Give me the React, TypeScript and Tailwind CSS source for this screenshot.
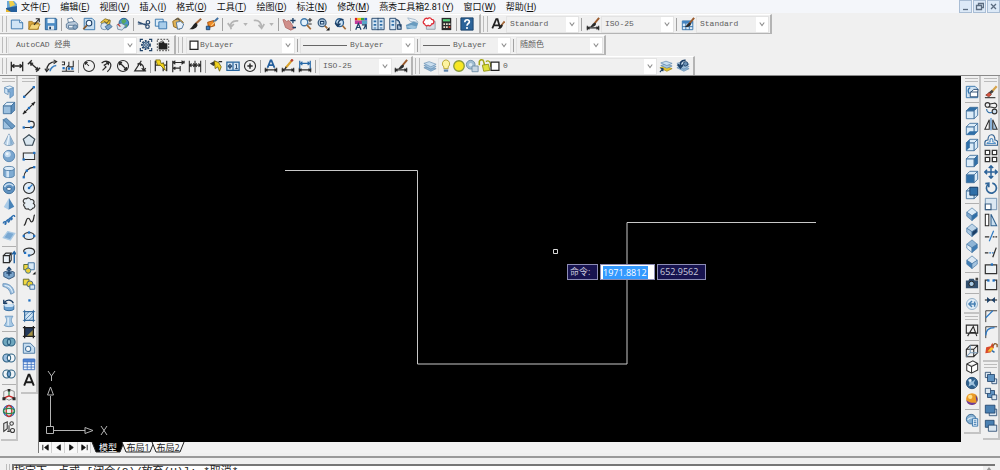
import { useState } from "react";
import type { ReactNode } from "react";
import clsx from "clsx";

const NAVY = "#1c3f66";
const BLUE = "#2f6fa8";
const SKY = "#a9cdea";
const PALE = "#dcecf8";
const INK = "#2b2b2b";

/* ---------- shared icon shapes, all on a 16x16 grid ---------- */

interface CubeProps {
  front?: string;
  top?: string;
  side?: string;
  stroke?: string;
}

function Cube({ front = PALE, top = PALE, side = PALE, stroke = "#3f6f9c" }: CubeProps) {
  return (
    <g stroke={stroke} strokeWidth="1" strokeLinejoin="round">
      <path d="M1.500 5.500h9v9h-9z" fill={front} />
      <path d="M1.500 5.500l4-4h9l-4 4z" fill={top} />
      <path d="M10.500 5.500l4-4v9l-4 4z" fill={side} />
    </g>
  );
}

function Iso({ left = PALE, right = PALE, top = PALE }: { left?: string; right?: string; top?: string }) {
  return (
    <g stroke="#4a7ba8" strokeWidth=".8" strokeLinejoin="round">
      <path d="M8 1l6 5-6 4-6-4z" fill={top} />
      <path d="M2 6l6 4v5.500L2 10.500z" fill={left} />
      <path d="M14 6l-6 4v5.500l6-5z" fill={right} />
    </g>
  );
}

function Dot({ x, y }: { x: number; y: number }) {
  return <rect x={x - 1.3} y={y - 1.3} width="2.600" height="2.600" fill="#1f6fc0" />;
}

function Rings({ left = "none", right = "none", mid = "none" }: { left?: string; right?: string; mid?: string }) {
  return (
    <g stroke="#2e6283" strokeWidth="1.2">
      <circle cx="5.500" cy="8" r="4.500" fill={left} />
      <circle cx="10.500" cy="8" r="4.500" fill={right} />
      <path d="M8 4.300a4.500 4.500 0 0 1 0 7.400a4.500 4.500 0 0 1 0-7.400z" fill={mid} />
    </g>
  );
}

function Brush() {
  return (
    <g>
      <path d="M15 1L9.500 7.500" stroke="#9a5a2c" strokeWidth="2.200" />
      <path d="M10.500 6.500C7 6.500 7 10 4.500 11c3 1 6.500 0 7-3.200z" fill={INK} />
    </g>
  );
}

function Pages({ fill = SKY }: { fill?: string }) {
  return (
    <g stroke={BLUE} strokeLinejoin="round">
      <path d="M1.500 2.500h9v8h-9z" fill={PALE} />
      <path d="M5.500 5.500h9v8h-9z" fill={fill} />
    </g>
  );
}

const sheets = (
  <g stroke="#5d87ad" strokeWidth=".7">
    <path d="M1 10l6-2 8 3-6 3z" fill="#8db3d3" />
    <path d="M1 7.500l6-2 8 3-6 3z" fill="#a9c8e2" />
    <path d="M1 5l6-2 8 3-6 3z" fill="#c9deef" />
  </g>
);

const dimBase = <path d="M1.500 10v5M14.500 10v5M2 12.500h12M4 11l-2.500 1.500L4 14M12 11l2.500 1.500L12 14" fill="none" stroke={INK} strokeWidth="1.3" />;

const icons: Record<string, ReactNode> = {
  new: (
    <g>
      <path d="M1.500 3.500h9.500l3.500 3v7h-13z" fill="#cfe4f5" stroke={BLUE} />
      <path d="M11 3.500v3h3.500" fill="#fff" stroke={BLUE} />
    </g>
  ),
  open: (
    <g>
      <path d="M2 14V5h4l1 1.500h6V14z" fill="#d9a53a" stroke="#9a6b14" strokeWidth=".8" />
      <path d="M2 14l3-6h10l-3 6z" fill="#f5d67a" stroke="#9a6b14" strokeWidth=".8" />
      <path d="M8 9L14 2M10 2h4v4" fill="none" stroke={INK} strokeWidth="1.300" />
    </g>
  ),
  save: (
    <g>
      <path d="M1.500 1.500h12l1 1v12h-13z" fill="#4d8cc4" stroke="#285d8f" />
      <path d="M4 2h8v5H4z" fill="#e7f2fb" />
      <path d="M4.500 10h7v4.500h-7z" fill="#dfe7ee" />
      <path d="M6 11h2v3H6z" fill={NAVY} />
    </g>
  ),
  print: (
    <g stroke="#4d6c8c" strokeWidth=".9">
      <path d="M4 7l-1-5 5-1 3 5z" fill="#fff" />
      <path d="M1.500 8l3-2 7-1 3 3v4l-3 2h-7l-3-2z" fill="#b9cadb" />
      <path d="M4 9.500h7l1 3H4z" fill="#eef4f9" />
      <circle cx="11.500" cy="11.500" r="2.500" fill="#8aa9c6" />
    </g>
  ),
  preview: (
    <g>
      <path d="M2.500 1.500h9l3 3v10h-12z" fill="#c7def1" stroke={BLUE} />
      <circle cx="8" cy="7" r="3.200" fill="#f2f9ff" stroke={NAVY} strokeWidth="1.200" />
      <path d="M5.500 9.500L1.500 14" stroke="#8a5a2b" strokeWidth="2" />
    </g>
  ),
  publish: (
    <g stroke="#6b5510" strokeWidth=".8">
      <path d="M2 6l5-4 6 2-1 5-6 2z" fill="#e9c23b" />
      <circle cx="6" cy="10.500" r="4" fill="#dbe7f2" stroke="#4c6f92" />
      <path d="M7 11l5-3 3 3-5 4z" fill="#7aa2c8" stroke="#2c5a87" />
      <path d="M6 5l3 2 3-4" fill="none" stroke={INK} />
    </g>
  ),
  globePrint: (
    <g>
      <circle cx="9" cy="7" r="5.500" fill="#4b93cf" stroke="#23588c" />
      <path d="M6 4l4-2 2 3-3 3-2-1zM9 9l4-1-1 4z" fill="#57a860" />
      <path d="M1 9l5-2 5 3-4 5-5-1z" fill="#d9e4ee" stroke="#5c7691" strokeWidth=".8" />
      <path d="M2 8l3 3" stroke="#c0392b" strokeWidth="1.300" />
    </g>
  ),
  cut: (
    <g fill="none" stroke="#2d4d72" strokeWidth="1.400">
      <path d="M1 5.500l10 4M1 8h10" />
      <circle cx="12.500" cy="6" r="2" />
      <circle cx="12" cy="11" r="2" />
    </g>
  ),
  copyClip: <Pages />,
  paste: (
    <g>
      <path d="M2 5l6-4 6 5-4 8-7-3z" fill="#e0b256" stroke="#8a6114" />
      <path d="M6 6l5-1 3.500 3-2 5-5 1z" fill="#e6f0fa" stroke="#466d93" />
      <path d="M5 3l3-1 2 2" fill="none" stroke="#555" strokeWidth="1.500" />
    </g>
  ),
  match: (
    <g>
      <path d="M15 2L8.500 8" stroke="#a4683a" strokeWidth="2.400" />
      <path d="M9.500 6.500C6 7 5.500 12 1.500 14c4 .6 8.500-1 9.500-5z" fill="#222" />
    </g>
  ),
  blockEdit: (
    <g>
      <path d="M3 6l7-2 1 6-7 2z" fill="#f08a24" stroke="#9b4a0c" />
      <path d="M15 1l-5 5" stroke="#3d6ea0" strokeWidth="2.200" />
      <path d="M1.500 10.500h4v4h-4z" fill="#3a7cc0" stroke={NAVY} />
      <path d="M12 5l-5 5" stroke="#fbd38a" strokeWidth="1.200" />
    </g>
  ),
  undo: <path d="M6 14C3.500 8 7 3.500 14 4.500M2 7l3.500 4.500L9 8" fill="none" stroke="#b4b4b4" strokeWidth="2" />,
  redo: <path d="M2 4c6-1 9 3 9 8M7.500 9l3.500 4 3-5" fill="none" stroke="#b4b4b4" strokeWidth="2" />,
  pan: (
    <g>
      <path d="M1 3l2 0 2 2 3-1 3 4 3 5-4 2-6-3z" fill="#d08f8a" stroke="#a7605c" strokeWidth=".8" />
      <path d="M12.500 1v6M9.500 4h6M12 12h4" stroke={NAVY} strokeWidth="1.500" />
    </g>
  ),
  zoomRt: (
    <g fill="none">
      <circle cx="6" cy="6" r="4" fill="#e3f1fb" stroke="#3f78ab" strokeWidth="1.500" />
      <path d="M9 9l4.500 5" stroke="#a26a35" strokeWidth="2" />
      <path d="M12.500 1v5M10 3.500h5M10.500 8h4" stroke={INK} strokeWidth="1.200" />
    </g>
  ),
  zoomWin: (
    <g fill="none">
      <circle cx="7" cy="6.500" r="4.500" fill="#cfe5f6" stroke="#3f5f80" strokeWidth="1.500" />
      <path d="M5 5h4v3H5z" stroke={NAVY} strokeWidth="1.200" />
      <path d="M10 10l3 3" stroke="#a26a35" strokeWidth="2" />
      <path d="M15.500 11.500v4h-4z" fill="#111" />
    </g>
  ),
  zoomPrev: (
    <g fill="none">
      <circle cx="7.500" cy="6.500" r="4.500" fill="#cfe5f6" stroke="#2c5d8d" strokeWidth="1.500" />
      <path d="M11 10l3.500 4" stroke="#a26a35" strokeWidth="2" />
      <path d="M12 3C8 2 6 5 5.500 9M2.500 6.500l3 4 3-3" stroke={NAVY} strokeWidth="1.700" />
    </g>
  ),
  props: (
    <g>
      <path d="M1 1h3v3H1z" fill="#d22" />
      <path d="M4 1h4v3H4z" fill="#e8c21e" />
      <path d="M8 1h4v3H8z" fill="#36a043" />
      <path d="M12 1h3v3h-3z" fill="#2b5fd0" />
      <path d="M1 4h14v4H1z" fill="#c23a9a" />
      <path d="M9 4h6v4H9z" fill="#58a6c8" />
      <path d="M2 14.500l3-7 3 7M3 12h4M9 9h5v5M11 14l3-6" fill="none" stroke={NAVY} strokeWidth="1.400" />
    </g>
  ),
  design: (
    <g>
      <path d="M1 1.500h14v13H1z" fill="#d6e6f4" stroke={NAVY} />
      <path d="M8 1v14" stroke={NAVY} />
      <path d="M3 4h3v2H3zM3 8h3v2H3zM3 12h3v1H3zM10 4h3v2h-3zM10 8h3v2h-3zM10 12h3v1h-3z" fill={BLUE} />
    </g>
  ),
  palettes: (
    <g>
      <path d="M2 1.500h7v13H2z" fill="#d6e6f4" stroke={NAVY} />
      <path d="M4 4h3v2H4zM4 8h3v2H4z" fill={BLUE} />
      <path d="M9 3c4 0 5 3 5 8M11 9h4v5h-4z" fill="#b5cbe0" stroke={NAVY} strokeWidth="1.200" />
    </g>
  ),
  sheetSet: (
    <g>
      <path d="M3 1l9 2 3 3-9-1z" fill="#e9f1f8" stroke="#93abc0" strokeWidth=".8" />
      <path d="M1 9l9-4 5 2-2 6-11 1z" fill="#6b9cbf" />
      <path d="M1 11l6-2 7 2-5 3z" fill="#9dc4de" />
    </g>
  ),
  markup: (
    <g>
      <path d="M5 5h10v9H5z" fill="#d4dde5" stroke="#8e9aa5" />
      <path d="M3 8a2.200 2.200 0 0 1-.5-4A2.500 2.500 0 0 1 6.500 2a2.600 2.600 0 0 1 4.500.8A2.500 2.500 0 0 1 11 8a2.500 2.500 0 0 1-4 1.500A2.500 2.500 0 0 1 3 8z" fill="#fff" stroke="#e0303a" strokeWidth="1.500" />
    </g>
  ),
  calc: (
    <g>
      <path d="M3 1h11v14H3z" fill="#2a2a2a" />
      <path d="M4.500 2.500h8v2.500h-8z" fill="#55d37a" />
      <path d="M5 7h2v2H5zM8 7h2v2H8zM11 7h2v2h-2zM5 10.500h2v2H5zM8 10.500h2v2H8z" fill="#e7e0d0" />
      <path d="M11 10.500h2v2h-2z" fill="#e04a3a" />
    </g>
  ),
  help: (
    <g>
      <path d="M1 1h14v14H1z" fill="#2b6399" stroke="#173e66" />
      <path d="M5.500 6c0-4 5.500-3.500 5.200-.5C10.500 7.500 8 7.500 8 10" fill="none" stroke="#fff" strokeWidth="1.900" />
      <circle cx="8" cy="12.500" r="1.200" fill="#fff" />
    </g>
  ),
  textStyle: (
    <g>
      <path d="M1.500 13L6 2.500h1.500L10.500 13M3 9.500h6" fill="none" stroke="#222" strokeWidth="2" />
      <path d="M15.500 5l-4 5" stroke="#a4683a" strokeWidth="2" />
      <path d="M12.500 8.500c-3 0-2.500 3.500-5 5 3 .5 5.500-1 6-4z" fill="#222" />
    </g>
  ),
  dimStyle: (
    <g>
      {dimBase}
      <Brush />
    </g>
  ),
  tableStyle: (
    <g>
      <path d="M1.500 4.500h12v10h-12z" fill="#dcebf8" stroke={BLUE} />
      <path d="M1.500 4.500h12v3h-12z" fill="#4385c2" />
      <path d="M1.500 11h12M5.500 7v7.500M9.500 7v7.500" stroke={BLUE} />
      <Brush />
    </g>
  ),
  gear: (
    <g fill="none" stroke={NAVY}>
      <path d="M1.500 4.500v-3h3M11.500 1.500h3v3M14.500 11.500v3h-3M4.500 14.500h-3v-3" strokeWidth="1.300" />
      <circle cx="8" cy="8" r="4.600" strokeWidth="2" strokeDasharray="2 1.300" />
      <circle cx="8" cy="8" r="3.600" fill="#a7bfd6" />
      <circle cx="8" cy="8" r="1.500" fill="#fff" />
    </g>
  ),
  workspace: (
    <g>
      <path d="M1.500 1.500h13v13h-13z" fill="none" stroke="#333" strokeDasharray="2 1.500" />
      <path d="M3 13V5h4l1-2 2 3h3v7z" fill="#222" />
      <path d="M4 5l4-2" stroke="#5a5a5a" />
    </g>
  ),
  dimLinear: <path d="M1.500 3v11M14.500 3v11M2 8h12M5 6L2 8l3 2M11 6l3 2-3 2" fill="none" stroke={INK} strokeWidth="1.500" />,
  dimAligned: (
    <g fill="none" stroke={INK} strokeWidth="1.500">
      <path d="M5.500 1.500L1 6M15 10l-4.500 4.500M3.500 4L13 12.500" />
      <path d="M3 4l4 .5L4.500 8zM13.500 13l-4-.5L12 9z" fill={INK} strokeWidth=".5" />
    </g>
  ),
  dimArc: (
    <g fill="none">
      <path d="M3 14C3 7 7 3 14 3" stroke={INK} strokeWidth="1.400" />
      <path d="M7 14c0-3 3-6 7-6.500" stroke="#3a80c4" strokeWidth="1.800" />
      <path d="M1 11l2 3.500L6 11M11 1l3.500 2L11 5.500" stroke={INK} strokeWidth="1.200" />
    </g>
  ),
  dimOrd: (
    <g fill="none" stroke={INK} strokeWidth="1.200">
      <path d="M1 3.500h3v3H1M1 14h14M9 3v6h5M6 10v4M14 2v7M6 10l3-3" />
      <g stroke="none">
        <Dot x={3} y={10.5} />
        <Dot x={9} y={11} />
        <Dot x={13} y={11} />
      </g>
    </g>
  ),
  dimRad: (
    <g fill="none" stroke={INK} strokeWidth="1.200">
      <circle cx="8" cy="8" r="6.300" />
      <path d="M8 8L4 4M4 6.500V4h2.500" />
    </g>
  ),
  dimJog: <path d="M3 4.500C8 .5 14 3 13.500 8c-.3 3-2 5-4 6.500M4 13l4-4-2-2 5-3M8 3.500l3 .5-.5 3" fill="none" stroke={INK} strokeWidth="1.400" />,
  dimDia: (
    <g fill="none" stroke={INK} strokeWidth="1.200">
      <circle cx="8" cy="8" r="6.300" />
      <path d="M4 4l8 8M4 7V4h3M12 9v3H9" strokeWidth="1.500" />
    </g>
  ),
  dimAng: <path d="M15 13.500H2L9.500 2M7 5c4 .5 5.500 4 5.500 8M5 6l3-1.500L9 8M10 10.500l2.500 3 2-3" fill="none" stroke={INK} strokeWidth="1.400" />,
  dimQuick: (
    <g>
      <path d="M1.500 2v12M14.500 2v12M10.500 4v10M2 7h12" stroke={INK} strokeWidth="1.400" />
      <path d="M2 1h5l1 4h3l2 8-6-6H4z" fill="#f1d21a" stroke="#6b5c00" strokeWidth=".8" />
    </g>
  ),
  dimBaseLine: <path d="M2 2v13M15 2v3M10.500 8v6M2 4h13M2 10.500h8M5 2L2.500 4 5 6M12 2l2.500 2-2.500 2M5 9l-2.500 1.500L5 12" fill="none" stroke={INK} strokeWidth="1.300" />,
  dimCont: <path d="M1.500 2v13M8 2v13M14.500 2v13M2 7h12M4 5L2 7l2 2M6 5l2 2-2 2M10 5L8 7l2 2M12 5l2 2-2 2" fill="none" stroke={INK} strokeWidth="1.200" />,
  dimSpace: (
    <g>
      <path d="M1 5l6-3 3 3-5 3z" fill="#3a3a3a" />
      <path d="M6 2l5 2 3 5-2 5-2-5-3 2z" fill="#efd01f" stroke="#5d5000" strokeWidth=".8" />
      <path d="M11 3h4" stroke={INK} strokeWidth="1.500" />
    </g>
  ),
  tolerance: (
    <g>
      <path d="M1 3.500h14v9.500H1z" fill="#d6e6f4" stroke="#27649c" strokeWidth="1.400" />
      <path d="M8 4v9" stroke="#27649c" strokeWidth="1.400" />
      <circle cx="4.500" cy="8.300" r="1.800" fill="none" stroke={NAVY} />
      <path d="M2 8.300h5M4.500 5.500v6M10.500 6.500l1.500-.5v5M10.500 11h3" fill="none" stroke={NAVY} />
    </g>
  ),
  center: (
    <g fill="none" stroke={INK} strokeWidth="1.300">
      <circle cx="8" cy="8" r="6.300" />
      <path d="M8 5v6M5 8h6" strokeWidth="1.700" />
    </g>
  ),
  dimEdit: (
    <g>
      <path d="M4 10l3.500-8.500h1L12 10M5.500 7h5" fill="none" stroke="#245f9d" strokeWidth="2" />
      {dimBase}
    </g>
  ),
  dimTEdit: (
    <g>
      {dimBase}
      <path d="M13 1L5.500 10" stroke="#d9a22c" strokeWidth="2.400" />
      <path d="M13.500 .5l-2 2" stroke="#b8433a" strokeWidth="2.600" />
      <path d="M6 9l-1.500 2.500" stroke={INK} strokeWidth="1.500" />
    </g>
  ),
  dimUpdate: (
    <g>
      {dimBase}
      <path d="M2 2v9M14 2v9M3 5h10M5 3L3 5l2 2M11 3l2 2-2 2" fill="none" stroke="#2869a8" strokeWidth="1.400" />
    </g>
  ),
  layers: sheets,
  bulb: (
    <g>
      <path d="M8 1a4.500 4.500 0 0 0-2.500 8v2h5V9A4.500 4.500 0 0 0 8 1z" fill="#fdf3a0" stroke="#b4a02c" />
      <path d="M5.500 12h5v2.500h-5z" fill="#5e84ac" />
    </g>
  ),
  sun: <circle cx="8" cy="8" r="6" fill="#f8e723" stroke="#8a9a3a" strokeWidth="1.500" />,
  vpFreeze: (
    <g>
      <circle cx="6.500" cy="6.500" r="5" fill="#9fbdd2" stroke="#6b8ca5" />
      <path d="M8 8h7v6.500H8z" fill="#c6d6e2" stroke="#6b8ca5" />
      <circle cx="6.500" cy="6.500" r="2" fill="#dbe8f1" />
    </g>
  ),
  lock: (
    <g>
      <path d="M1.500 7V4a2.500 2.500 0 0 1 5-1l1 4" fill="none" stroke="#a6a81a" strokeWidth="1.800" />
      <path d="M5 7l7-1 1.500 7-7 1z" fill="#dfe03a" stroke="#8d9010" />
      <path d="M9 3c3-2 6 0 5.500 6" fill="none" stroke="#a6a81a" strokeWidth="1.500" />
    </g>
  ),
  swatch: <path d="M3.500 3.500h9v9.500h-9z" fill="#fff" stroke="#222" strokeWidth="1.400" />,
  layerCurrent: (
    <g>
      <path d="M1 10l6-2 8 3-6 3z" fill="#e4c32d" stroke="#8d7712" strokeWidth=".7" />
      <path d="M2 7.500l6-2 7 2.500-6 2.500z" fill="#a9c8e2" stroke="#4f7ba5" strokeWidth=".7" />
      <path d="M2 4.500l6-2 7 2.500-6 2.500z" fill="#c9deef" stroke="#4f7ba5" strokeWidth=".7" />
      <path d="M1 15l3.500-4M2 11h2.500v3" fill="none" stroke={NAVY} strokeWidth="1.300" />
    </g>
  ),
  layerPrev: (
    <g>
      {sheets}
      <path d="M11 1.500C6 1 4.500 4 5 8M2 6l3 4 3-3.500" fill="none" stroke={NAVY} strokeWidth="2" />
      <circle cx="11" cy="5.500" r="2.500" fill="#6a90b4" stroke={NAVY} />
    </g>
  ),
  polysolid: (
    <g stroke="#5585b3" strokeWidth=".8">
      <path d="M3 3l4 2v6l-4-2z" fill="#cfe3f4" />
      <path d="M7 5l6-2v9l-4 3V8H7z" fill="#7eabd6" />
      <path d="M5 2l4-1 4 2-6 2-4-2z" fill="#e9f4fc" />
    </g>
  ),
  box: <Cube front="#9cc0df" top="#e2effa" side="#5e8fbd" stroke="#41719d" />,
  wedge: (
    <g stroke="#41719d" strokeWidth=".9" strokeLinejoin="round">
      <path d="M1.500 3l10 10.500h-10z" fill="#9fc2e0" />
      <path d="M1.500 3L5 1.500l10 9-3.500 3z" fill="#6b9ac4" />
    </g>
  ),
  cone: (
    <g stroke="#6d8eae" strokeWidth=".9">
      <path d="M8 1l5.500 11c-1 3-10 3-11 0z" fill="#bcd4e9" />
      <path d="M9 3l3.500 9-3 2z" fill="#86aed0" stroke="none" />
      <path d="M8 2L6 13.500" stroke="#eaf4fb" strokeWidth="1.500" />
    </g>
  ),
  sphere: (
    <g>
      <circle cx="8" cy="8" r="6.500" fill="#7aa6cf" stroke="#5684b0" />
      <circle cx="6.500" cy="6" r="3.500" fill="#c6dcf0" />
      <circle cx="6" cy="5.500" r="1.500" fill="#eef6fc" />
    </g>
  ),
  cylinder: (
    <g stroke="#41719d" strokeWidth=".9">
      <path d="M2 4v8.500c1 2.500 11 2.500 12 0V4z" fill="#7fabd2" />
      <path d="M5 5.500h3V14H5z" fill="#d2e5f5" stroke="none" />
      <ellipse cx="8" cy="4" rx="6" ry="2.400" fill="#dcebf8" />
    </g>
  ),
  torus: (
    <g>
      <circle cx="8" cy="8" r="6.500" fill="#5f92c1" stroke="#376a98" />
      <path d="M3 7c1-4 8-5 10-1" fill="none" stroke="#c8def1" strokeWidth="1.800" />
      <ellipse cx="8" cy="9" rx="2.700" ry="1.900" fill="#eef3f7" stroke="#2e5e8c" />
    </g>
  ),
  pyramid: (
    <g>
      <path d="M8 1L2 11.500l5.500 3z" fill="#a9cbe8" />
      <path d="M8 1l6 10-6.500 3.500z" fill="#4883b8" />
    </g>
  ),
  helix: (
    <path d="M1.500 12c0-3 4-3 3 0s-2-1 1-3.500 4 0 2.500 1.500-2-2 .5-3.800 4 0 2.500 1.300-1.500-2.500 1-4 2.500 0 2.500 1" fill="none" stroke="#2e6fb0" strokeWidth="1.500" />
  ),
  planar: <path d="M6.500 3l8 2-5 7.500-8-2.500z" fill="#7aa8d2" stroke="#a9c9e4" strokeWidth="1.500" />,
  extrude: (
    <g>
      <path d="M1.500 6.500h7v8h-7zM1.500 6.500l3-3h6l-2 3M8.500 14.500l2-3v-8" fill="#eaf1f7" stroke={INK} strokeWidth="1.300" />
      <path d="M14 15V3M11.500 5L14 2l2 3" fill="none" stroke="#2162a2" strokeWidth="1.600" />
    </g>
  ),
  presspull: (
    <g>
      <path d="M2 7l6-2 6 2v5l-6 3-6-3z" fill="#7ba5cb" stroke={NAVY} strokeWidth=".9" />
      <path d="M8 11V2M5.500 4.500L8 1.500l2.500 3M5 8h6" fill="none" stroke={NAVY} strokeWidth="1.500" />
    </g>
  ),
  sweep: (
    <g>
      <path d="M1 5V2c6-1 12 3 13 10l-4 2C9 9 6 6 1 5z" fill="#9bbfdf" stroke="#6690b8" strokeWidth=".9" />
      <path d="M3 4c5 0 8 3 9 8" fill="none" stroke="#e9f3fb" strokeWidth="1.200" />
    </g>
  ),
  revolve: (
    <g>
      <path d="M2.500 8h11v5c-2 2-9 2-11 0z" fill="#6aa0d0" stroke="#2f679c" />
      <path d="M13 6C11 1.500 5 1.500 3 5M2 2v4h4" fill="none" stroke={NAVY} strokeWidth="1.500" />
      <ellipse cx="8" cy="8.500" rx="5.500" ry="1.800" fill="#cfe4f5" />
    </g>
  ),
  loft: (
    <g>
      <path d="M3.500 2.500h9C10 6 10 9 13.500 13c-2 2-9 2-11 0C6 9 6 6 3.500 2.500z" fill="#a7c8e4" stroke="#6b99c2" />
      <path d="M7 4v9" stroke="#e6f1fa" strokeWidth="1.500" />
    </g>
  ),
  union: <Rings left="#6fa7be" right="#6fa7be" mid="#8dbccf" />,
  subtract: <Rings left="#9dbfe0" right="#f4f7fa" mid="#ffffff" />,
  intersect: <Rings left="#eef3f7" right="#eef3f7" mid="#6f9fd0" />,
  move3d: (
    <g fill="none" strokeWidth="1.400">
      <path d="M2 4l6-2.500L14 4v7l-6 3-6-3z" stroke="#666" strokeWidth=".8" />
      <path d="M8 9V3" stroke="#2d8a4e" />
      <path d="M8 9l6 2.500" stroke="#c22" />
      <path d="M8 9l-6 2.500" stroke="#c22" />
      <path d="M12 10.500h3.500V14H12zM.5 10.500H4V14H.5zM6.500 1h3v3h-3z" fill={INK} stroke="none" />
    </g>
  ),
  rotate3d: (
    <g fill="none" strokeWidth="1.500">
      <circle cx="8" cy="8" r="6.300" stroke="#2458b0" />
      <ellipse cx="8" cy="8" rx="3.200" ry="6.300" stroke="#c8322b" />
      <ellipse cx="8" cy="8" rx="6.300" ry="3" stroke="#2d8a4e" />
    </g>
  ),
  align3d: (
    <g fill="none" stroke="#3a3a3a" strokeWidth="1.200">
      <path d="M2 4l4-2v8l-4 3z" fill="#e6e6e6" />
      <circle cx="11" cy="4" r="2" />
      <circle cx="12" cy="12" r="2.300" />
      <path d="M8 6v7M6 13h3" />
    </g>
  ),
  line: (
    <g>
      <path d="M2 14L14 2" stroke={INK} strokeWidth="1.300" />
      <Dot x={2.5} y={13.5} />
      <Dot x={13.5} y={2.5} />
    </g>
  ),
  xline: (
    <g>
      <path d="M1 15L15 1" stroke={INK} strokeWidth="1.500" />
      <path d="M2.500 10.500l3 3-4 1zM13.500 5.500l-3-3 4-1z" fill="#222" />
      <Dot x={8} y={8} />
    </g>
  ),
  pline: (
    <g>
      <path d="M2 12h9c4 0 4-7 0-7H8" fill="none" stroke={INK} strokeWidth="1.300" />
      <Dot x={2} y={12} />
      <Dot x={10.5} y={12} />
      <Dot x={8} y={5} />
    </g>
  ),
  polygon: <path d="M8 2l6.500 5-2.500 7H4L1.500 7z" fill="#d8e5ee" stroke="#3a4a55" strokeWidth="1.400" />,
  rect: (
    <g>
      <path d="M1.500 4.500h13v7.500h-13z" fill="#e8f0f6" stroke={INK} strokeWidth="1.200" />
      <Dot x={2} y={12} />
      <Dot x={14} y={4.5} />
    </g>
  ),
  arc: (
    <g>
      <path d="M2 14C2.500 8 7 3 14 2.500" fill="none" stroke={INK} strokeWidth="1.300" />
      <Dot x={2} y={14} />
      <Dot x={5.5} y={6.5} />
      <Dot x={14} y={2.5} />
    </g>
  ),
  circle: (
    <g>
      <circle cx="8" cy="8" r="6.300" fill="#e2edf6" stroke={INK} strokeWidth="1.300" />
      <path d="M8 8l4-4" stroke="#2f7ac4" strokeWidth="1.300" />
      <Dot x={8} y={8} />
    </g>
  ),
  cloud: (
    <path d="M3 7a2.700 2.700 0 0 1 2-5 3 3 0 0 1 5 1 2.800 2.800 0 0 1 3 4.500 2.900 2.900 0 0 1-1 5.500 2.800 2.800 0 0 1-5 .5A2.800 2.800 0 0 1 3 11a2.300 2.300 0 0 1 0-4z" fill="#e6eef4" stroke="#333" strokeWidth="1.300" />
  ),
  spline: <path d="M2 14c3 0 2-8 5-8s2 5 4.500 4S13 3 14.500 2" fill="none" stroke={INK} strokeWidth="1.400" />,
  ellipse: (
    <g>
      <ellipse cx="8" cy="8" rx="6" ry="4" fill="#dfeaf4" stroke={INK} strokeWidth="1.300" />
      <Dot x={2} y={8} />
      <Dot x={14} y={8} />
      <Dot x={8} y={4} />
    </g>
  ),
  ellArc: (
    <g>
      <path d="M3 9C0 6 4 3.500 8 3.500c8 0 9 8 0 8.500" fill="#dfeaf4" stroke={INK} strokeWidth="1.300" />
      <Dot x={3.5} y={9} />
      <Dot x={8} y={12} />
    </g>
  ),
  insert: (
    <g>
      <path d="M2 4h6v6H2z" fill="#f0d742" stroke="#4a5f27" />
      <path d="M7 2h7v8H7z" fill="#d9e9f6" stroke="#34689a" />
      <circle cx="7" cy="11" r="3" fill="#e9cf35" stroke="#34689a" />
      <path d="M15.500 12v3.500H12z" fill="#111" />
    </g>
  ),
  makeBlock: (
    <g>
      <path d="M1.500 2.500h6.500v6.500H1.500z" fill="#f0d742" stroke="#5e6323" />
      <circle cx="9" cy="8" r="3.500" fill="#ead033" stroke="#3b5a7c" />
      <path d="M9 9h5.500v5H9z" fill="#d9e9f6" stroke="#34689a" />
    </g>
  ),
  point: <Dot x={8.5} y={8.5} />,
  hatch: (
    <g stroke="#2f679c">
      <path d="M3 3h10v10H3z" fill="#cfe4f5" />
      <path d="M1 3h14M1 13h14M3 1v14M13 1v14" />
      <path d="M3 8l5-5M3 13L13 3M8 13l5-5" strokeWidth=".8" />
    </g>
  ),
  gradient: (
    <g>
      <path d="M3 3h10v10H3z" fill="#23395a" />
      <path d="M5 13L13 5v8z" fill="#a18f42" />
      <path d="M1 3h14M1 13h14M3 1v14M13 1v14" stroke="#222" strokeWidth="1.500" />
    </g>
  ),
  region: (
    <g stroke="#41719d">
      <path d="M1.500 2.500h8l5 5v6.500h-13z" fill="#c5dcef" />
      <circle cx="7" cy="9" r="3" fill="#f4f8fb" strokeWidth="1.200" />
    </g>
  ),
  table: (
    <g stroke="#3b6fc0">
      <path d="M1.500 2.500h13v12h-13z" fill="#eaf2fc" />
      <path d="M1.500 2.500h13v3h-13z" fill="#4d83d6" />
      <path d="M1.500 8.500h13M1.500 11.500h13M6 5v9.500M10.500 5v9.500" strokeWidth=".9" />
    </g>
  ),
  mtext: <path d="M2.500 14.500L7.500 2h1l5 12.500M4.500 10.500h7" fill="none" stroke="#1c1c1c" strokeWidth="2.200" />,
  namedViews: (
    <g>
      <path d="M1.500 1.500h10l3 3v10h-13z" fill="#cfe2f2" stroke={BLUE} />
      <path d="M6 8h8.500v5.500H6zM7 8l3-3h5l-.5 3" fill="#fff" stroke={NAVY} />
      <path d="M6 3c-3 1-3 5-1 7" fill="none" stroke={BLUE} strokeWidth="1.500" />
    </g>
  ),
  vTop: <Cube top={BLUE} />,
  vBottom: (
    <g>
      <Cube />
      <path d="M1.500 14.500l4-4h9l-4 4z" fill={BLUE} />
    </g>
  ),
  vLeft: (
    <g>
      <Cube />
      <path d="M1.500 5.500l4-4v9l-4 4z" fill={BLUE} />
    </g>
  ),
  vRight: <Cube side={BLUE} />,
  vFront: <Cube front={BLUE} />,
  vBack: (
    <g>
      <Cube />
      <path d="M5.500 1.500h9v9h-9z" fill={BLUE} stroke={NAVY} />
    </g>
  ),
  isoSW: <Iso left="#7fa9cf" right={BLUE} />,
  isoSE: <Iso left="#a9c7e0" right={NAVY} top="#bcd4e8" />,
  isoNE: <Iso left="#e4eff8" right="#3f7db5" top="#8fb5d6" />,
  isoNW: <Iso left="#3f7db5" right="#a5c4df" top="#dbe8f3" />,
  camera: (
    <g>
      <path d="M1 5h3l1-2h5l1 2h4v9H1z" fill="#33506f" />
      <circle cx="7.500" cy="9" r="3" fill="#a9cbe6" stroke="#111" />
      <path d="M12 2h3v3h-3z" fill="#444" />
    </g>
  ),
  viewPrev: (
    <g fill="none" stroke="#4a82b4">
      <circle cx="8" cy="8" r="6.300" fill="#e2edf6" stroke="#8cabc6" />
      <path d="M12.500 8H4.500M8 4.500L4.500 8 8 11.500M11 5v6" strokeWidth="1.700" />
    </g>
  ),
  wire2d: <path d="M1.500 2.500h13v9h-13zM3 15L9.500 4l4 11M6 11h6" fill="none" stroke={INK} strokeWidth="1.300" />,
  wire3d: (
    <g fill="none" stroke="#222" strokeWidth="1.200" strokeLinejoin="round">
      <path d="M1.500 6h8.500v8.500H1.500zM1.500 6L6 1.500h8.500L10 6M14.500 1.500V10L10 14.500" />
      <path d="M6 1.500V10h8.500M6 10l-4.500 4.500" stroke="#7a9cba" />
    </g>
  ),
  hidden3d: <path d="M2 4.500L9 1l5.500 3v7.500L7.500 15 2 12zM2 4.500l5.500 3 7-3.500M7.500 7.500V15" fill="#fff" stroke="#333" strokeWidth="1.200" strokeLinejoin="round" />,
  realistic: (
    <g>
      <circle cx="8" cy="8" r="6.500" fill="#2f618e" stroke="#234c73" />
      <path d="M3 3.500l5 3 4-3-2 4.500 3 5-5-3-4 2 1-4z" fill="#9fc2de" />
      <circle cx="6" cy="5" r="1.500" fill="#e3f0fa" />
    </g>
  ),
  conceptual: (
    <g>
      <circle cx="8" cy="8" r="6.700" fill="#eb9a26" />
      <path d="M1.500 9a6.700 6.700 0 0 0 12 3C9 13 4 12 1.500 9z" fill="#6c3da0" />
      <circle cx="6" cy="5.500" r="2.500" fill="#ffe08a" />
      <path d="M12 3.500c3 3 3 6 1.500 8.500-1-3-1-6-1.500-8.500z" fill="#5b3f9e" />
    </g>
  ),
  styleMgr: (
    <g>
      <circle cx="7" cy="7" r="5.500" fill="#86b0d2" stroke="#35658f" />
      <path d="M3 8c2-3 6-3 8-1" fill="none" stroke="#dcebf6" strokeWidth="1.500" />
      <path d="M8.500 6.500h6v8.500h-6z" fill="#eaf3fb" stroke={BLUE} />
      <path d="M10 9h3M10 11h3M10 13h3" stroke={BLUE} />
    </g>
  ),
  erase: (
    <g>
      <path d="M14.500 1.500L8 8.500" stroke="#d7a44a" strokeWidth="2.600" />
      <path d="M6 10l4-3.500" stroke="#444" strokeWidth="3" />
      <path d="M2 11.500l4-3 2.500 2.500-3 2.500z" fill="#d9543f" stroke="#7a3226" strokeWidth=".8" />
      <path d="M1 14.500h12" stroke={INK} strokeWidth="1.200" />
    </g>
  ),
  copy: (
    <g fill="none" stroke="#333" strokeWidth="1.300">
      <circle cx="4" cy="4.500" r="2.700" />
      <path d="M6.500 3.500l5-1a2.700 2.700 0 1 1-1 5l-5-1" />
      <circle cx="12" cy="12" r="2.700" fill="#cfe2f2" />
      <path d="M3 9c0 4 3 5 6 4" stroke={BLUE} />
    </g>
  ),
  mirror: (
    <g strokeWidth="1.200">
      <path d="M6 3v11H1z" fill="#fff" stroke={INK} />
      <path d="M10 3v11h5z" fill="#a9c6df" stroke="#333" />
      <path d="M8 1v14" stroke="#2f7ac4" />
    </g>
  ),
  offset: (
    <g fill="none" strokeWidth="1.300">
      <path d="M1 14v-3c0-3 3-3 3.500-3 0-8 8-8 8 0 3 0 3.500 2 3 6z" stroke="#2d5e8e" />
      <path d="M3.500 12c0-2 3-1.500 3.500-2-1-5 4-5 3 0 1 .5 3 0 3 2z" stroke="#5592c9" />
    </g>
  ),
  array: <path d="M1.500 1.500h5v5h-5zM9.500 1.500h5v5h-5zM1.500 9.500h5v5h-5zM9.500 9.500h5v5h-5z" fill="#fff" stroke="#333" strokeWidth="1.500" />,
  move: <path d="M8 1v14M1 8h14M5.500 3.500L8 1l2.500 2.500M5.500 12.500L8 15l2.500-2.500M3.500 5.500L1 8l2.500 2.500M12.500 5.500L15 8l-2.500 2.500" fill="none" stroke="#2b6299" strokeWidth="1.700" />,
  rotate: <path d="M4.500 4a5.700 5.700 0 1 0 5-1.500M1.500 3l4-.5V7" fill="none" stroke="#2f6599" strokeWidth="1.900" />,
  scale: (
    <g>
      <path d="M1.500 1.500h13v13h-13z" fill="#dbe8f3" stroke="#6a8dae" />
      <path d="M1.500 8h6.500v6.500H1.500z" fill="#fff" stroke="#3a5e82" strokeWidth="1.300" />
    </g>
  ),
  stretch: (
    <g>
      <path d="M1.500 1.500h4v13h-4z" fill="#fff" stroke={INK} strokeWidth="1.200" />
      <path d="M8 1.500L14.500 14.500H8z" fill="#c9deef" stroke="#31618f" strokeWidth="1.200" />
    </g>
  ),
  trim: (
    <g strokeWidth="1.400">
      <path d="M1 9h5" stroke={INK} />
      <path d="M6 14l5-12" stroke="#2f7ac4" />
      <path d="M10 9h5" stroke={INK} strokeDasharray="2 1" />
    </g>
  ),
  extend: (
    <g strokeWidth="1.400">
      <path d="M1 9h4" stroke={INK} />
      <path d="M6 9h5" stroke="#2f7ac4" strokeDasharray="2 1" />
      <path d="M10 14l4-11" stroke={INK} />
    </g>
  ),
  breakPt: (
    <g>
      <path d="M1.500 4.500h13v10h-13z" fill="#eef2f5" stroke="#333" strokeWidth="1.400" />
      <Dot x={9} y={4} />
    </g>
  ),
  breakAt: (
    <g>
      <path d="M5 3.500H1.500v11h13v-11H11" fill="#eef2f5" stroke="#333" strokeWidth="1.400" />
      <Dot x={5} y={4} />
      <Dot x={11} y={4} />
    </g>
  ),
  join: (
    <g>
      <path d="M1 8h14" stroke="#333" strokeWidth="1.400" />
      <path d="M3.500 4.500L7.500 8l-4 3.500zM12.500 4.500L8.500 8l4 3.500z" fill={NAVY} />
    </g>
  ),
  chamfer: (
    <g fill="none" strokeWidth="1.400">
      <path d="M2 15V2h13" stroke={INK} strokeWidth="1" />
      <path d="M2 10l8-8" stroke="#2f7ac4" />
    </g>
  ),
  fillet: (
    <g fill="none" strokeWidth="1.400">
      <path d="M2 15V2h13" stroke={INK} strokeWidth="1" />
      <path d="M2 12c0-6 4-9 10-9" stroke="#2f7ac4" />
    </g>
  ),
  explode: (
    <g>
      <path d="M1.500 14l1-7 5-1 2-4 2 5-4 6z" fill="#d94a2b" />
      <path d="M4 12l4-5 3 1-3 4z" fill="#f6c52f" />
      <path d="M10 6c2-3 2-4 5-2v3" fill="none" stroke="#8a5a2c" strokeWidth="1.500" />
      <path d="M9 11l3 2" stroke="#2f6fa8" strokeWidth="1.800" />
    </g>
  ),
  front: (
    <g stroke={NAVY} strokeWidth=".9">
      <path d="M1.500 1.500h6v6h-6zM9 9h5.500v5.500H9z" fill="#dbe7f1" />
      <path d="M4 4h8v8H4z" fill="#5f93c2" />
    </g>
  ),
  back: (
    <g stroke={NAVY} strokeWidth=".9">
      <path d="M4 4h8v8H4z" fill="#5f93c2" />
      <path d="M1.500 1.500h6v6h-6zM9 9h5.500v5.500H9z" fill="#dbe7f1" />
    </g>
  ),
  above: (
    <g stroke={NAVY} strokeWidth=".9">
      <path d="M6 7h8.500v7.500H6z" fill="#dbe7f1" />
      <path d="M1.500 2.500h11v9h-11z" fill="#4a80b2" />
    </g>
  ),
  under: (
    <g stroke={NAVY} strokeWidth=".9">
      <path d="M1.500 1.500h10v8h-10z" fill="#4a80b2" />
      <path d="M5 7h9.500v7H5z" fill="#dbe7f1" />
    </g>
  ),
};

function Ico({ name, className }: { name: string; className?: string }) {
  return (
    <svg viewBox="0 0 16 16" className={clsx("h-[14px] w-[14px] shrink-0", className)}>
      {icons[name]}
    </svg>
  );
}

/* ---------- toolbars ---------- */

function Tool({ name, vertical }: { name: string; vertical?: boolean }) {
  return (
    <button
      type="button"
      aria-label={name}
      className={clsx("flex shrink-0 items-center justify-center", vertical ? "h-4 w-full" : "h-full w-[17px]")}
    >
      <Ico name={name} />
    </button>
  );
}

function Tools({ names, vertical }: { names: string; vertical?: boolean }) {
  return (
    <>
      {names.split(" ").map((name, i) =>
        name === "|" ? (
          <span key={i} className={clsx("flex shrink-0 items-center justify-center", vertical ? "h-[5px] w-full" : "h-full w-1")}>
            <span className={vertical ? "h-px w-[14px] bg-[#b0b0b0]" : "h-[13px] w-px bg-[#a2a2a2]"} />
          </span>
        ) : (
          <Tool key={i} name={name} vertical={vertical} />
        )
      )}
    </>
  );
}

function Bar({ children }: { children: ReactNode }) {
  return (
    <div className="flex h-5 shrink-0 items-center border-t border-r-2 border-b border-t-white border-r-[#b4b4b4] border-b-[#b4b4b4]">
      <span className="mr-px ml-[2px] h-4 w-[5px] shrink-0 border-x border-[#bcbcbc]" />
      {children}
    </div>
  );
}

function Column({ children, tight }: { children: ReactNode; tight?: boolean }) {
  return (
    <div className={clsx("flex w-[17px] flex-col border-r-2 border-b-2 border-[#c4c4c4]", !tight && "pb-1")}>
      <span className="mx-px my-[2px] h-1 shrink-0 border-y border-[#bcbcbc]" />
      {children}
    </div>
  );
}

interface ComboProps {
  label: string;
  value: string;
  className: string;
  lead?: ReactNode;
}

function Combo({ label, value, className, lead }: ComboProps) {
  return (
    <label className={clsx("flex h-[17px] shrink-0 items-center border border-[#e3e3e3] bg-[#f0f0f0]", className)}>
      {lead}
      <select
        aria-label={label}
        className="h-full min-w-0 flex-1 appearance-none bg-transparent pl-[3px] font-['Liberation_Mono','Noto_Sans_CJK_SC',monospace] text-[8px] text-[#5c5c5c] outline-none"
      >
        <option>{value}</option>
      </select>
      <span className="pointer-events-none flex h-full w-3 shrink-0 items-center justify-center bg-white">
        <svg viewBox="0 0 8 8" className="h-[6px] w-[6px]">
          <path d="M1 2l3 4 3-4" fill="none" stroke="#8f8f8f" strokeWidth="1.500" />
        </svg>
      </span>
    </label>
  );
}

function Divider() {
  return <span className="mx-[2px] h-[13px] w-px shrink-0 bg-[#a2a2a2]" />;
}

function Drop() {
  return (
    <button type="button" aria-label="history" className="flex h-full w-[9px] shrink-0 items-center justify-center">
      <svg viewBox="0 0 6 4" className="h-[3px] w-[5px]">
        <path d="M0 0h6L3 4z" fill="#b4b4b4" />
      </svg>
    </button>
  );
}

/* ---------- menu ---------- */

const menus = [
  ["文件", "F"],
  ["编辑", "E"],
  ["视图", "V"],
  ["插入", "I"],
  ["格式", "O"],
  ["工具", "T"],
  ["绘图", "D"],
  ["标注", "N"],
  ["修改", "M"],
  ["燕秀工具箱2.81", "Y"],
  ["窗口", "W"],
  ["帮助", "H"],
];

const winButtons = [
  { label: "最小化", d: "M2 7.500h5" },
  { label: "还原", d: "M3.500 3V1.500h5v4H7M1.500 3.500h5v4h-5z" },
  { label: "关闭", d: "M2 2l5 5M7 2L2 7" },
];

function MenuBar() {
  return (
    <nav className="flex h-[13px] shrink-0 items-center bg-[#f4f6fa]">
      <svg viewBox="0 0 12 12" className="mr-[3px] ml-[6px] h-3 w-3 shrink-0">
        <path d="M1 0h7l3 3v4H1z" fill="#6aa7d8" />
        <path d="M3 0h4l2 4-5 2z" fill="#f0cf4a" />
        <path d="M0 7l11-2v6H0z" fill="#255f9c" />
        <path d="M0 8l5 3H0z" fill="#e8b62c" />
      </svg>
      <div className="flex gap-[10px] font-['Roboto','Noto_Sans_CJK_SC',sans-serif] text-[9px] leading-3 text-[#111]">
        {menus.map(([text, key]) => (
          <button key={key} type="button" className="whitespace-nowrap">
            {text}(<u>{key}</u>)
          </button>
        ))}
      </div>
      <div className="ml-auto flex gap-px">
        {winButtons.map((b) => (
          <button
            key={b.label}
            type="button"
            aria-label={b.label}
            className="flex h-[13px] w-[13px] items-center justify-center border border-[#a9bdd4] bg-[#dce9f7]"
          >
            <svg viewBox="0 0 9 9" className="h-[9px] w-[9px]">
              <path d={b.d} fill="none" stroke="#5b6c80" strokeWidth="1.300" />
            </svg>
          </button>
        ))}
      </div>
    </nav>
  );
}

/* ---------- drawing area ---------- */

function Canvas() {
  const [x, setX] = useState("1971.8812");

  return (
    <div className="relative min-h-0 flex-1 overflow-hidden bg-black">
      <svg className="absolute top-0 left-0 h-[366px] w-[921px]" viewBox="0 0 921 366" fill="none">
        <path d="M246 94.500h132.500V288h209.500V146.500h189" stroke="#c8c8c8" />
        <path d="M514.500 173.500h4v4h-4z" stroke="#d8d8d8" />
        <g stroke="#b4b4b4">
          <path d="M7.500 350.500h7v7h-7zM11.500 350V320M15 354.500h31" />
          <path d="M11.500 311l3 8h-6zM54 354.500l-8-3v6z" />
          <path d="M9 295l3.500 5v5M16 295l-3.500 5M62 350l6 9M68 350l-6 9" />
        </g>
      </svg>
      <div className="absolute top-[188px] left-[528px] flex gap-[2px] text-[9px] leading-3 text-[#c9c9dc]">
        <span className="flex h-4 w-[31px] items-center border border-[#8c8cb4] bg-[#17134f] pl-[2px]">命令:</span>
        <label className="flex h-4 w-[55px] items-center border border-[#8c8cb4] bg-white pl-[2px]">
          <input
            aria-label="X"
            value={x}
            onChange={(e) => setX(e.target.value)}
            className="h-[13px] w-[45px] bg-[#3399ff] text-white outline-none"
          />
        </label>
        <span className="flex h-4 w-[49px] items-center border border-[#8c8cb4] bg-[#17134f] pl-[2px]">652.9562</span>
      </div>
    </div>
  );
}

const navPaths = ["M2 2v6M8 2L4 5l4 3z", "M7 2L3 5l4 3z", "M3 2l4 3-4 3z", "M2 2l4 3-4 3zM8 2v6"];
const navLabels = ["第一个", "上一个", "下一个", "最后一个"];

function Tabs() {
  const [active, setActive] = useState("模型");

  return (
    <div className="flex h-[11px] shrink-0 bg-[#f2f2f2]">
      {navPaths.map((d, i) => (
        <button
          key={d}
          type="button"
          aria-label={navLabels[i]}
          className="flex w-[13px] items-center justify-center border-r border-[#cfcfcf] bg-[#f8f8f8]"
        >
          <svg viewBox="0 0 10 10" className="h-[9px] w-[9px]">
            <path d={d} fill="#111" stroke="#111" />
          </svg>
        </button>
      ))}
      <div className="ml-[2px] flex">
        {["模型", "布局1", "布局2"].map((tab) => (
          <button
            key={tab}
            type="button"
            onClick={() => setActive(tab)}
            className={clsx("relative h-[11px] w-[30px] text-[9px] leading-[11px]", tab === active ? "text-white" : "text-[#222]")}
          >
            <svg viewBox="0 0 30 11" className="absolute inset-0 h-full w-full overflow-visible">
              <path d="M-1 0l4 10h24l4-10" fill={tab === active ? "#000" : "#f8f8f8"} stroke="#222" />
            </svg>
            <span className="relative">{tab}</span>
          </button>
        ))}
      </div>
    </div>
  );
}

export default function App() {
  return (
    <div className="flex h-screen w-full flex-col overflow-hidden bg-[#f0f0f0] font-['Open_Sans','Noto_Sans_CJK_SC',sans-serif]">
      <MenuBar />
      <header className="-mb-px flex shrink-0 flex-col gap-px pt-px">
        <div className="flex">
          <Bar>
            <Tools names="new open save | print preview publish globePrint | cut copyClip paste match blockEdit | undo" />
            <Drop />
            <Tool name="redo" />
            <Drop />
            <Tools names="| pan zoomRt zoomWin zoomPrev | props design palettes sheetSet markup calc | help" />
            <span className="w-1" />
          </Bar>
          <Bar>
            <Tool name="textStyle" />
            <Combo label="文字样式" value="Standard" className="w-[73px]" />
            <Divider />
            <Tool name="dimStyle" />
            <Combo label="标注样式" value="ISO-25" className="w-[73px]" />
            <Divider />
            <Tool name="tableStyle" />
            <Combo label="表格样式" value="Standard" className="mr-px w-[73px]" />
          </Bar>
        </div>
        <div className="flex">
          <Bar>
            <Combo label="工作空间" value="AutoCAD 经典" className="w-[129px] pl-1" />
            <Tool name="gear" />
            <Tool name="workspace" />
            <span className="w-[3px]" />
          </Bar>
          <Bar>
            <Combo label="颜色" value="ByLayer" className="ml-[2px] w-[109px]" lead={<Ico name="swatch" className="-mr-1" />} />
            <Divider />
            <Combo label="线型" value="ByLayer" className="w-[115px]" lead={<span className="ml-[2px] h-px w-11 bg-[#666]" />} />
            <Divider />
            <Combo label="线宽" value="ByLayer" className="w-[91px]" lead={<span className="ml-[2px] h-px w-[27px] bg-[#666]" />} />
            <Divider />
            <Combo label="打印样式" value="随颜色" className="mr-px w-[87px]" />
          </Bar>
        </div>
        <div className="flex">
          <Bar>
            <Tools names="dimLinear dimAligned dimArc dimOrd | dimRad dimJog dimDia dimAng | dimQuick dimBaseLine dimCont | dimSpace tolerance center | dimEdit dimTEdit dimUpdate |" />
            <Combo label="标注样式" value="ISO-25" className="ml-[2px] w-[73px]" />
            <Tool name="dimStyle" />
            <span className="w-[2px]" />
          </Bar>
          <Bar>
            <Tool name="layers" />
            <Combo
              label="图层"
              value="0"
              className="w-[219px]"
              lead={
                <>
                  <Ico name="bulb" className="-mr-px" />
                  <Ico name="sun" className="-mr-px" />
                  <Ico name="vpFreeze" className="-mr-px" />
                  <Ico name="lock" className="-mr-1" />
                  <Ico name="swatch" className="-mr-[2px]" />
                </>
              }
            />
            <Tool name="layerCurrent" />
            <Tool name="layerPrev" />
            <span className="w-[2px]" />
          </Bar>
        </div>
      </header>

      <main className="flex min-h-0 flex-1 border-t border-[#8a8a8a]">
        <aside className="flex shrink-0 items-start gap-[3px] pl-px">
          <Column>
            <Tools vertical names="polysolid box wedge cone sphere cylinder torus pyramid helix planar | extrude presspull sweep revolve loft | union subtract intersect | move3d rotate3d align3d" />
          </Column>
          <Column>
            <Tools vertical names="line xline pline polygon rect arc circle cloud spline ellipse ellArc insert makeBlock point hatch gradient region table mtext" />
          </Column>
        </aside>

        <section className="flex min-w-0 flex-1 flex-col border-l border-[#777]">
          <Canvas />
          <Tabs />
        </section>

        <aside className="flex shrink-0 items-start gap-[2px] pl-[3px]">
          <div className="flex flex-col">
            <Column tight>
              <Tools vertical names="namedViews | vTop vBottom vLeft vRight vFront vBack | isoSW isoSE isoNE isoNW | camera | viewPrev" />
            </Column>
            <Column>
              <Tools vertical names="wire2d | wire3d hidden3d realistic conceptual | styleMgr" />
            </Column>
          </div>
          <div className="flex flex-col">
            <Column>
              <Tools vertical names="erase copy mirror offset array move rotate scale stretch trim extend breakPt breakAt join chamfer fillet explode" />
            </Column>
            <Column>
              <Tools vertical names="front back above under" />
            </Column>
          </div>
        </aside>
      </main>

      <footer className="mt-[3px] h-[14px] shrink-0 overflow-hidden border-t-2 border-[#9a9a9a] pt-[6px] pr-[5px] pl-[6px]">
        <div className="flex">
          <span className="mr-[2px] h-4 w-1 shrink-0 border-x border-[#bcbcbc]" />
          <div className="min-w-0 flex-1 border-t-2 border-l-2 border-[#777] bg-white font-['Liberation_Mono','Noto_Sans_CJK_SC',monospace] text-[11px] leading-[13px] whitespace-pre text-[#222]">
            指定下一点或 [闭合(C)/放弃(U)]: *取消*
          </div>
          <span className="flex h-4 w-3 shrink-0 justify-center border-t-2 border-[#777] pt-px text-[#888]">
            <svg viewBox="0 0 6 4" className="h-1 w-[6px]">
              <path d="M0 4h6L3 0z" fill="#999" />
            </svg>
          </span>
        </div>
      </footer>
    </div>
  );
}
